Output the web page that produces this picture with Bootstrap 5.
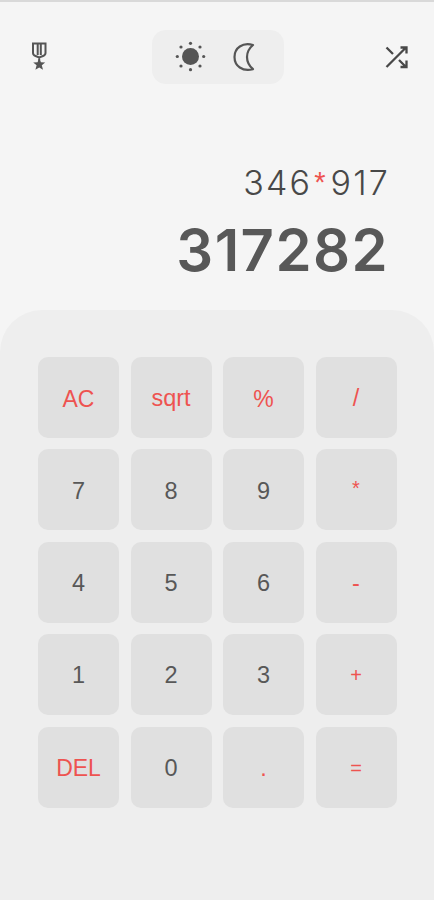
<!DOCTYPE html>
<html lang="en">
<head>
<meta charset="utf-8">
<meta name="viewport" content="width=device-width, initial-scale=1">
<title>Calculator</title>
<link href="https://cdn.jsdelivr.net/npm/bootstrap@5.3.0/dist/css/bootstrap.min.css" rel="stylesheet">
<style>
body{background:#f5f5f5;color:#585858;font-family:"Liberation Sans",Arial,sans-serif}
.calc{height:900px;border-top:2px solid #d9d9d9;overflow:hidden}
.topbar{height:82px;padding:28px 25px 0 30px}
.modes{width:132px;height:54px;border-radius:14px;background:#eee;padding-left:23px;gap:26px;margin-left:-4px}
.side{width:24px;height:54px}
.side.medal svg{margin-bottom:2px}
.readout{height:226px;padding-right:46px}
.expr{margin-top:74px;height:50px;font:300 34px/50px Inter,sans-serif;letter-spacing:2.2px;color:#484848;margin-right:-2px}
.expr .accent{font-family:"Liberation Sans",Arial,sans-serif;font-size:29px;line-height:1;letter-spacing:5px;padding-left:2px;vertical-align:3px}
.result{height:60px;font:600 58px/60px Inter,sans-serif;letter-spacing:1.4px;margin:12px -1px 0 0}
.accent{color:#ee5350}
.pad{background:#eee;border-radius:42px 42px 0 0;padding:47px 37px 0 38px}
.keys{display:grid;grid-template-columns:repeat(4,81px);grid-auto-rows:81px;gap:11.4px 11.5px}
.key,.key:hover{background:#e0e0e0;border:0;border-radius:10px;font-size:23.5px;line-height:1;padding:3px 0 0;color:#585858}
.key.accent,.key.accent:hover{color:#ee5350}
.key.word{font-size:23px}
.key.sign{font-size:20px;padding-top:1px}
.key.star{padding:0 0 3px}
</style>
</head>
<body>
<main class="calc d-flex flex-column">
<header class="topbar d-flex justify-content-between">
<div class="side medal d-flex align-items-center">
<svg width="18" height="30" viewBox="0 0 18 30" fill="none" stroke="#555" stroke-width="2"><path d="M3 2.500H15.500V12Q15.500 14 13 15L9.200 16.500 5.500 15Q3 14 3 12ZM7.700 3v11M10.800 3v11M9.200 16v5"/><path fill="#555" stroke="none" d="M9.200 17.500l1.700 3.700 4.300.3-3.400 2.800 1.200 4.400L9.200 26.500l-3.800 2.200 1.200-4.400L3.200 21.500l4.300-.3z"/></svg>
</div>
<div class="modes d-flex align-items-center">
<svg width="31" height="32" viewBox="0 0 31 32" fill="#555"><circle cx="15.500" cy="15.500" r="8.500"/><circle cx="15.500" cy="2.300" r="1.600"/><circle cx="15.500" cy="28.700" r="1.600"/><circle cx="2.300" cy="15.500" r="1.600"/><circle cx="28.700" cy="15.500" r="1.600"/><circle cx="6" cy="6" r="1.600"/><circle cx="25" cy="6" r="1.600"/><circle cx="6" cy="25" r="1.600"/><circle cx="25" cy="25" r="1.600"/></svg>
<svg width="24" height="30" viewBox="0 0 24 30" fill="none" stroke="#555" stroke-width="2.200" stroke-linejoin="round"><path d="M21 3C10.500 0 2.500 6 2.500 15s8 15 18.500 12.200Q15 22 15 15t6-12Z"/></svg>
</div>
<div class="side d-flex align-items-center">
<svg width="24" height="24" viewBox="0 0 24 24" fill="none" stroke="#484848" stroke-width="2.300"><path d="M1.500 22L20.500 3M1.500 2.500l6.500 6.500M14 15l6.500 6.500M15.500 2.500h6v6M21.500 15.500V22h-6"/></svg>
</div>
</header>
<section class="readout text-end">
<div class="expr">346<span class="accent">*</span>917</div>
<div class="result">317282</div>
</section>
<section class="pad flex-grow-1">
<div class="keys">
<button class="btn key word accent">AC</button><button class="btn key accent">sqrt</button><button class="btn key word accent">%</button><button class="btn key accent">/</button>
<button class="btn key">7</button><button class="btn key">8</button><button class="btn key">9</button><button class="btn key sign star accent">*</button>
<button class="btn key">4</button><button class="btn key">5</button><button class="btn key">6</button><button class="btn key accent">-</button>
<button class="btn key">1</button><button class="btn key">2</button><button class="btn key">3</button><button class="btn key sign accent">+</button>
<button class="btn key word accent">DEL</button><button class="btn key">0</button><button class="btn key accent">.</button><button class="btn key sign accent">=</button>
</div>
</section>
</main>
<script src="https://cdn.jsdelivr.net/npm/bootstrap@5.3.0/dist/js/bootstrap.bundle.min.js"></script>
</body>
</html>
